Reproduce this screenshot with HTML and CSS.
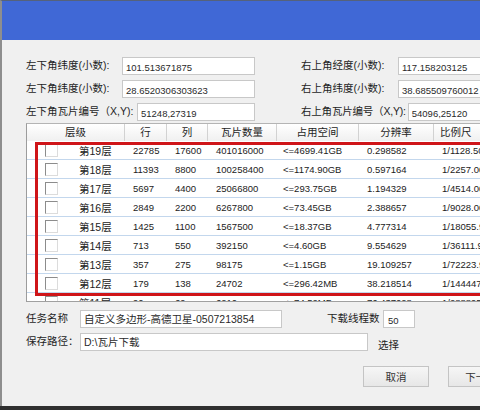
FILE: index.html
```html
<!DOCTYPE html>
<html lang="zh-CN">
<head>
<meta charset="utf-8">
<title>瓦片下载</title>
<link rel="stylesheet" href="styles.css">
</head>
<body>
<div class="dialog">
  <div class="titlebar"></div>
  <div class="content">
    <div class="coords">
      <div class="col col-left">
        <div class="field"><span class="field-label">左下角纬度(小数):</span><span class="box">101.513671875</span></div>
        <div class="field"><span class="field-label">左下角纬度(小数):</span><span class="box">28.6520306303623</span></div>
        <div class="field"><span class="field-label wide">左下角瓦片编号（X,Y):</span><span class="box">51248,27319</span></div>
      </div>
      <div class="col col-right">
        <div class="field"><span class="field-label">右上角经度(小数):</span><span class="box">117.158203125</span></div>
        <div class="field"><span class="field-label">右上角纬度(小数):</span><span class="box">38.685509760012</span></div>
        <div class="field"><span class="field-label wide">右上角瓦片编号（X,Y):</span><span class="box">54096,25120</span></div>
      </div>
    </div>

    <div class="grid">
      <div class="thead">
        <div class="th">层级</div>
        <div class="th">行</div>
        <div class="th">列</div>
        <div class="th">瓦片数量</div>
        <div class="th">占用空间</div>
        <div class="th">分辨率</div>
        <div class="th th-last">比例尺</div>
      </div>
      <div class="tbody">
        <div class="tr"><div class="td level"><span class="check"></span>第19层</div><div class="td">22785</div><div class="td">17600</div><div class="td">401016000</div><div class="td space">&lt;=4699.41GB</div><div class="td">0.298582</div><div class="td">1/1128.50</div></div>
        <div class="tr"><div class="td level"><span class="check"></span>第18层</div><div class="td">11393</div><div class="td">8800</div><div class="td">100258400</div><div class="td space">&lt;=1174.90GB</div><div class="td">0.597164</div><div class="td">1/2257.00</div></div>
        <div class="tr"><div class="td level"><span class="check"></span>第17层</div><div class="td">5697</div><div class="td">4400</div><div class="td">25066800</div><div class="td space">&lt;=293.75GB</div><div class="td">1.194329</div><div class="td">1/4514.00</div></div>
        <div class="tr"><div class="td level"><span class="check"></span>第16层</div><div class="td">2849</div><div class="td">2200</div><div class="td">6267800</div><div class="td space">&lt;=73.45GB</div><div class="td">2.388657</div><div class="td">1/9028.00</div></div>
        <div class="tr"><div class="td level"><span class="check"></span>第15层</div><div class="td">1425</div><div class="td">1100</div><div class="td">1567500</div><div class="td space">&lt;=18.37GB</div><div class="td">4.777314</div><div class="td">1/18055.99</div></div>
        <div class="tr"><div class="td level"><span class="check"></span>第14层</div><div class="td">713</div><div class="td">550</div><div class="td">392150</div><div class="td space">&lt;=4.60GB</div><div class="td">9.554629</div><div class="td">1/36111.98</div></div>
        <div class="tr"><div class="td level"><span class="check"></span>第13层</div><div class="td">357</div><div class="td">275</div><div class="td">98175</div><div class="td space">&lt;=1.15GB</div><div class="td">19.109257</div><div class="td">1/72223.96</div></div>
        <div class="tr"><div class="td level"><span class="check"></span>第12层</div><div class="td">179</div><div class="td">138</div><div class="td">24702</div><div class="td space">&lt;=296.42MB</div><div class="td">38.218514</div><div class="td">1/144447.93</div></div>
        <div class="tr"><div class="td level"><span class="check"></span>第11层</div><div class="td">90</div><div class="td">69</div><div class="td">6210</div><div class="td space">&lt;=74.52MB</div><div class="td">76.437028</div><div class="td">1/288895.85</div></div>
      </div>
      <div class="mark"></div>
    </div>

    <div class="task">
      <div class="field">
        <span class="field-label short">任务名称</span>
        <span class="box box-name cjk">自定义多边形-高德卫星-0507213854</span>
        <span class="field-label threads">下载线程数</span>
        <span class="box box-threads">50</span>
      </div>
      <div class="field">
        <span class="field-label short">保存路径：</span>
        <span class="box box-path cjk">D:\瓦片下载</span>
        <span class="pick">选择</span>
      </div>
    </div>

    <div class="actions">
      <button class="btn" type="button">取消</button>
      <button class="btn" type="button">下一步</button>
    </div>
  </div>
</div>
</body>
</html>
```

FILE: styles.css
```css
* {
  box-sizing: border-box;
}

html,
body {
  margin: 0;
  height: 100%;
}

body {
  background: #2f2f2f;
  overflow: hidden;
  font-family: "Liberation Sans", "Noto Sans CJK SC", sans-serif;
  font-size: 10.5px;
  color: #1e1e1e;
}

/* window frame */
.dialog {
  width: 620px;
  height: 406px;
  background: #f0f0f0;
  border-left: 2px solid #8e8e8e;
  border-top: 1px solid #55627c;
}

.titlebar {
  height: 39px;
  background: #4068d6;
}

.content {
  padding: 17px 0 0 24px;
}

/* coordinate inputs */
.coords {
  display: flex;
  gap: 46px;
}

.col {
  display: flex;
  flex-direction: column;
  gap: 5px;
}

.col-left {
  width: 229px;
}

.col-right {
  width: 280px;
}

.field {
  display: flex;
  align-items: center;
  height: 18px;
}

.field-label {
  flex: none;
  width: 96px;
  white-space: nowrap;
  line-height: 14px;
  margin-top: -2px;
}

.field-label.wide {
  width: 111px;
}

.col-right .field-label {
  width: 97px;
}

.col-right .field-label.wide {
  width: auto;
  margin-right: 2px;
  letter-spacing: -0.2px;
}

.box {
  flex: 1;
  height: 18px;
  background: #fff;
  border: 1px solid #c8c8c8;
  padding: 3px 0 0 3px;
  font-size: 9.5px;
  line-height: 13px;
  white-space: nowrap;
  overflow: hidden;
  color: #2a2a2a;
}

.box.cjk {
  font-size: 10.5px;
  padding-top: 2px;
}

/* layer table */
.grid {
  position: relative;
  margin-top: 2px;
  width: 600px;
  border-left: 1px solid #9c9c9c;
  border-top: 1px solid #b4b4b4;
}

.thead,
.tr {
  display: grid;
  grid-template-columns: 98px 42px 41px 69px 82px 75px 120px;
}

.thead {
  height: 17px;
  background: linear-gradient(#ffffff, #f0f0f0);
}

.th {
  border-right: 1px solid #d2d2d2;
  text-align: center;
  line-height: 17px;
  white-space: nowrap;
}

.th.th-last {
  text-align: left;
  padding-left: 6px;
}

.tbody {
  height: 161px;
  overflow: hidden;
  background: #fff;
  border-bottom: 1px solid #a0a0a0;
}

.tr {
  height: 19px;
  border-bottom: 1px solid #c3d7ed;
  align-items: center;
}

.td {
  padding-left: 8px;
  font-size: 9.5px;
  white-space: nowrap;
  color: #222;
}

.td.space {
  padding-left: 6px;
}

.td.level {
  display: flex;
  align-items: center;
  padding-left: 18px;
  font-size: 10.5px;
}

.check {
  width: 13px;
  height: 13px;
  margin-right: 21px;
  background: #fff;
  border: 1px solid;
  border-color: #8c8c8c #dcdcdc #dcdcdc #8c8c8c;
}

/* highlight frame drawn over the selected layers */
.mark {
  position: absolute;
  left: 8px;
  top: 18px;
  width: 600px;
  height: 154px;
  border: 3px solid #cf1519;
  pointer-events: none;
}

/* task settings */
.task {
  margin-top: 8px;
  display: flex;
  flex-direction: column;
  gap: 5px;
}

.field-label.short {
  width: 54px;
}

.box-name {
  flex: none;
  width: 202px;
}

.field-label.threads {
  width: 56px;
  margin-left: 45px;
}

.box-threads {
  flex: none;
  width: 32px;
  padding-left: 4px;
}

.box-path {
  flex: none;
  width: 288px;
}

.pick {
  margin-left: 10px;
  margin-top: 4px;
}

/* dialog buttons */
.actions {
  margin-top: 15px;
  display: flex;
  gap: 19px;
  padding-left: 337px;
}

.btn {
  flex: none;
  width: 66px;
  height: 21px;
  padding: 0;
  background: linear-gradient(#f6f6f6, #e7e7e7);
  border: 1px solid #c4c4c4;
  border-radius: 0;
  font-family: inherit;
  font-size: 10.5px;
  color: #333;
}
```
